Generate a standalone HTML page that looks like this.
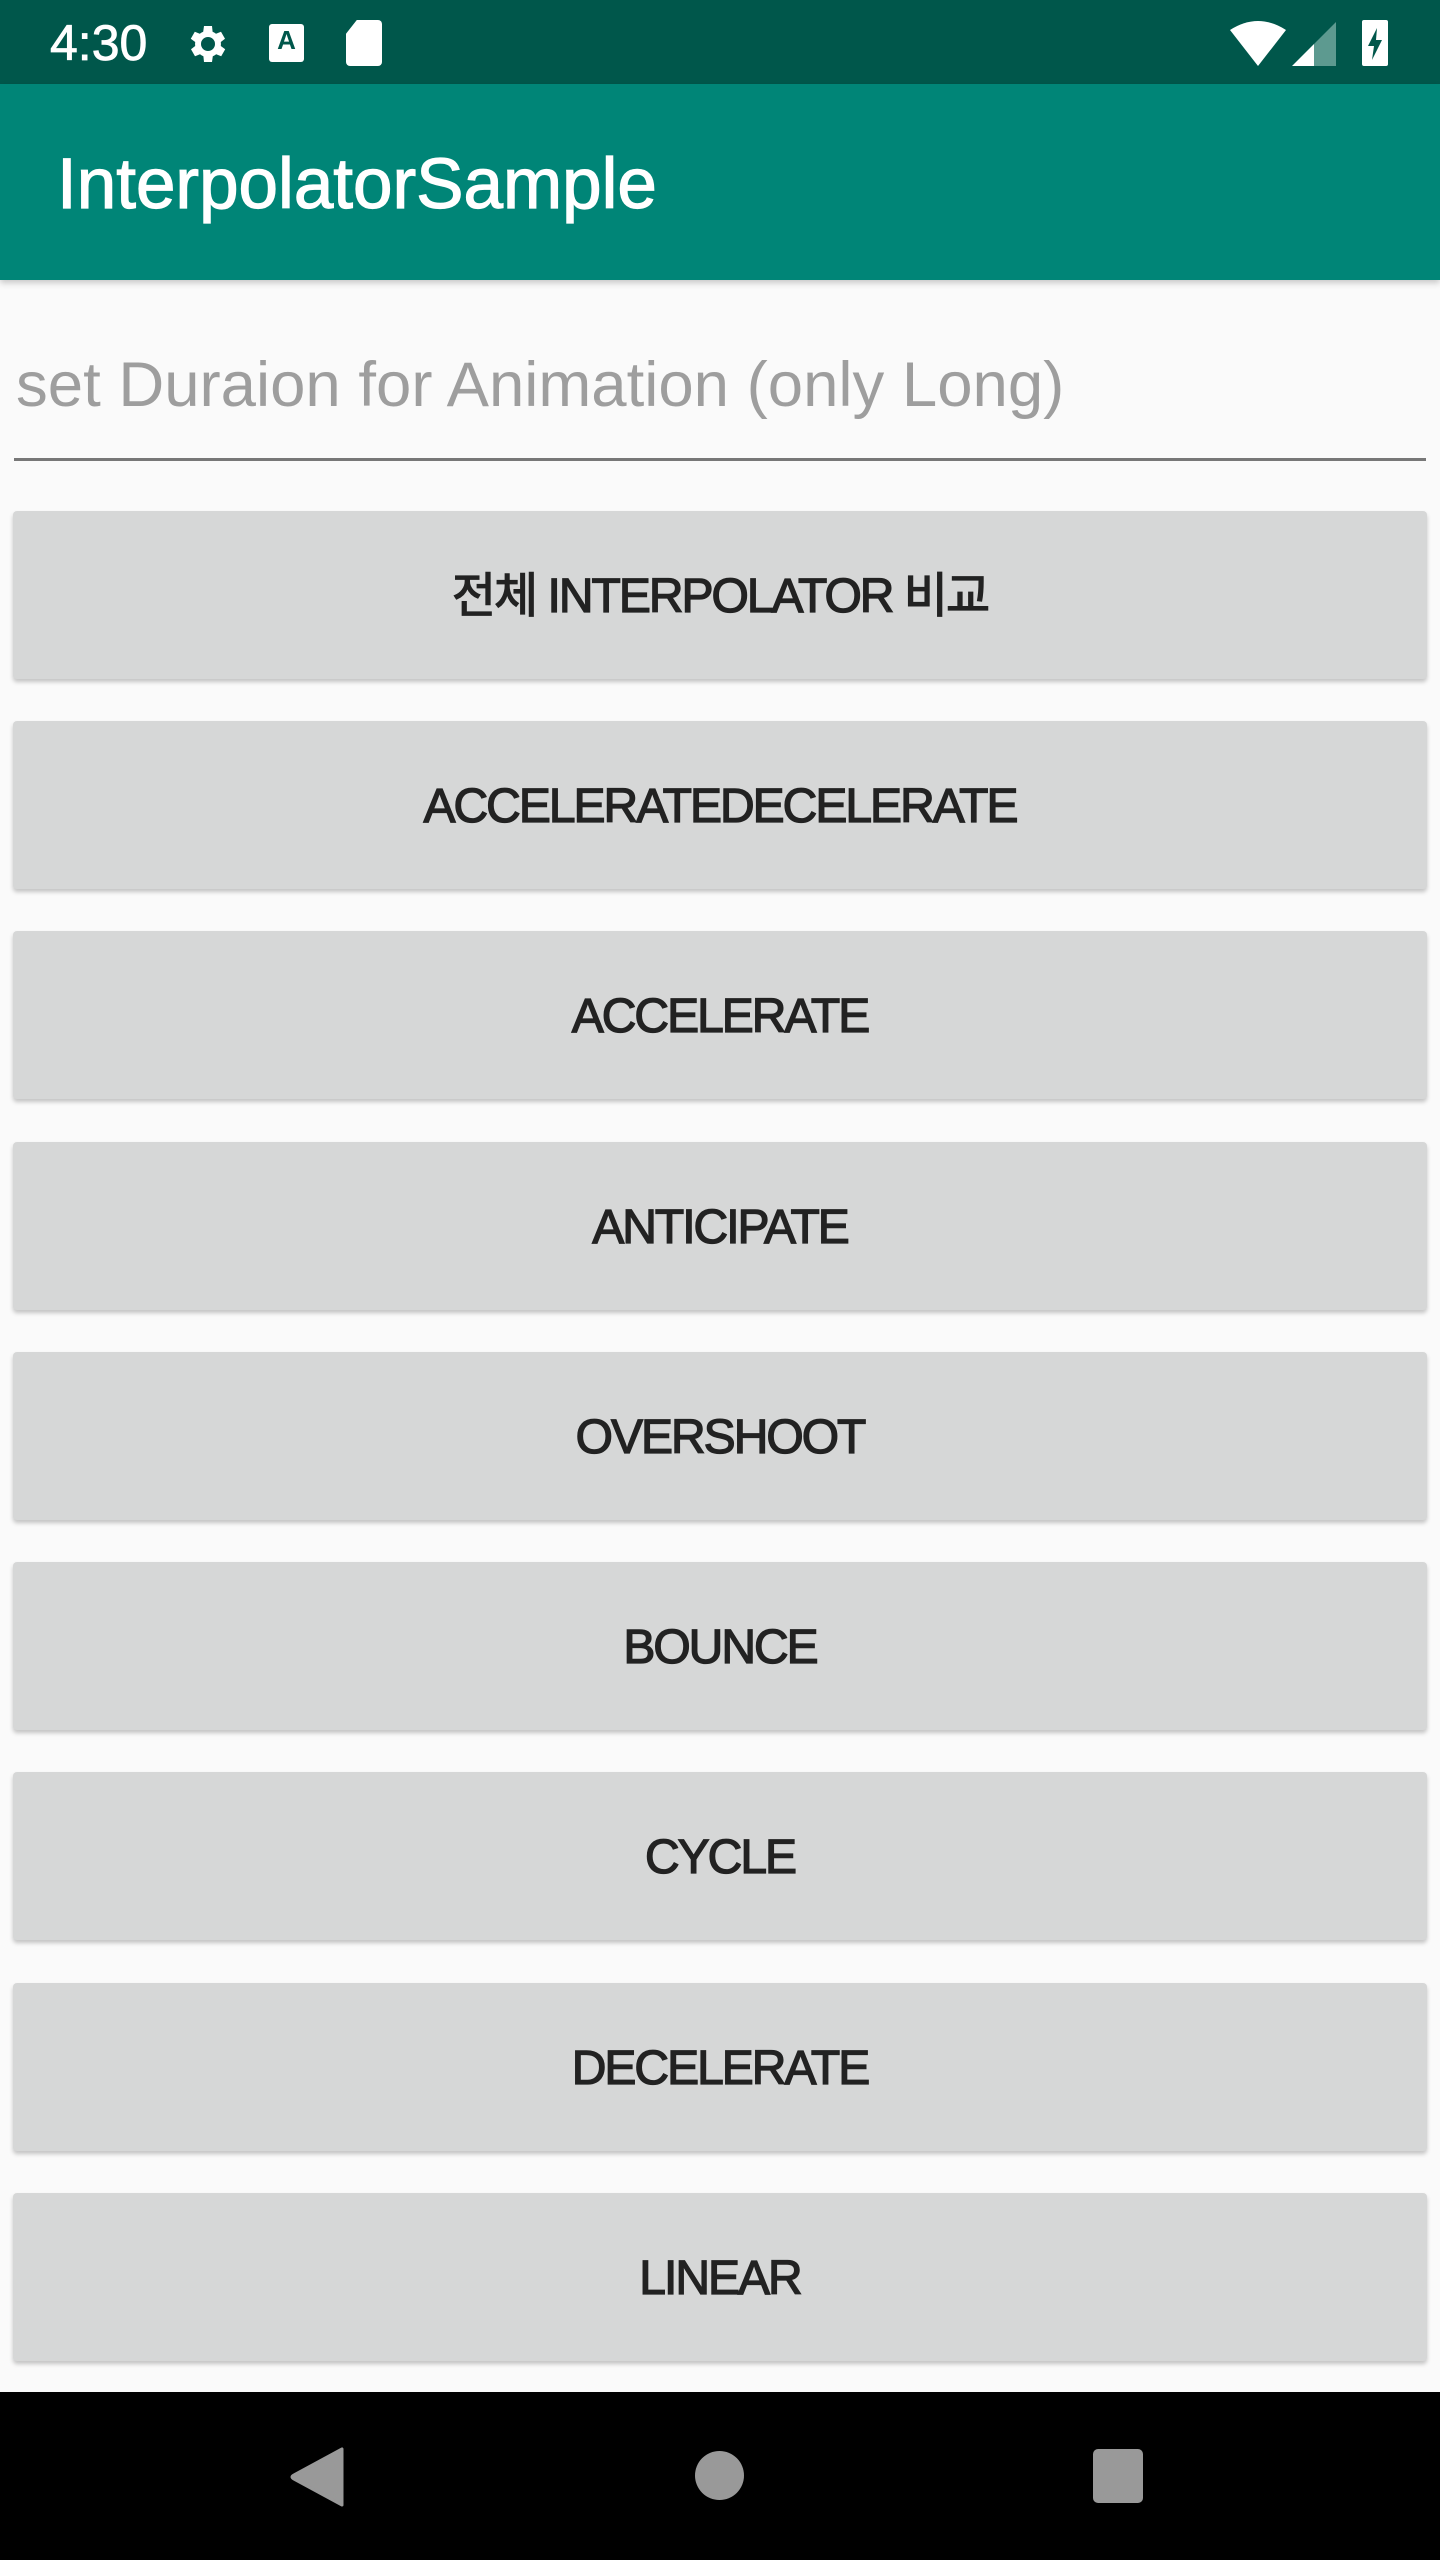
<!DOCTYPE html>
<html><head><meta charset="utf-8"><style>
*{margin:0;padding:0;box-sizing:border-box}
body{width:1440px;height:2560px;background:#fafafa;font-family:"Liberation Sans","Noto Sans CJK KR",sans-serif;position:relative;overflow:hidden}
.sb{position:absolute;left:0;top:0;width:1440px;height:84px;background:#00574b;color:#fff}
.ab{position:absolute;left:0;top:84px;width:1440px;height:196px;background:#008577;box-shadow:0 3px 6px rgba(0,0,0,.2)}
.title{position:absolute;left:57px;top:150px;font-size:71px;color:#fff;line-height:70px;-webkit-text-stroke:1.2px #fff}
.hint{position:absolute;left:16px;top:348px;font-size:63.5px;color:#9e9e9e;line-height:74px}
.line{position:absolute;left:14px;top:458px;width:1412px;height:3px;background:#777}
.btn{position:absolute;left:13px;width:1414px;height:168px;background:#d6d7d7;border-radius:4px;box-shadow:0 3px 4px rgba(0,0,0,.22);font-size:48px;color:#222;text-align:center;line-height:172px;-webkit-text-stroke:1.3px #222;letter-spacing:-2px}
.nav{position:absolute;left:0;top:2392px;width:1440px;height:168px;background:#000}
</style></head><body>
<div class="sb">
<div style="position:absolute;left:50px;top:16px;font-size:50px;line-height:54px;-webkit-text-stroke:0.8px #fff">4:30</div>
<svg style="position:absolute;left:184px;top:20px" width="48" height="48" viewBox="0 0 24 24"><path fill="#fff" d="M19.4 13a7.5 7.5 0 0 0 0-2l2.1-1.6-2-3.5-2.5 1a7 7 0 0 0-1.7-1L15 3h-4l-.4 2.9a7 7 0 0 0-1.7 1l-2.5-1-2 3.5L6.6 11a7.5 7.5 0 0 0 0 2l-2.1 1.6 2 3.5 2.5-1a7 7 0 0 0 1.7 1L11 21h4l.4-2.9a7 7 0 0 0 1.7-1l2.5 1 2-3.5zM13 15.5a3.5 3.5 0 1 1 0-7 3.5 3.5 0 0 1 0 7z" transform="translate(-1 0)"/></svg>
<div style="position:absolute;left:269px;top:24px;width:35px;height:38px;background:#fff;border-radius:3px;color:#00574b;font-size:26px;font-weight:bold;text-align:center;line-height:32px">A</div>
<div style="position:absolute;left:346px;top:20px;width:36px;height:46px;background:#fff;border-radius:4px;clip-path:polygon(30% 0,100% 0,100% 100%,0 100%,0 30%)"></div>
<svg style="position:absolute;left:1230px;top:20px" width="56" height="46" viewBox="0 0 56 46"><path fill="#fff" d="M0 10 Q28 -8 56 10 L28 46z"/></svg>
<svg style="position:absolute;left:1292px;top:22px" width="44" height="44" viewBox="0 0 44 44"><path fill="#fff" d="M0 44 L22 22 L22 44z"/><path fill="#5d9a90" d="M22 22 L44 0 L44 44 L22 44z"/></svg>
<div style="position:absolute;left:1362px;top:20px;width:26px;height:46px;background:#fff;border-radius:2px"></div>
<svg style="position:absolute;left:1366px;top:28px" width="18" height="32" viewBox="0 0 18 32"><path fill="#00574b" d="M11 0 L2 18 H8 L6 32 L16 12 H10z"/></svg>
</div>
<div class="ab"><div class="title" style="top:66px">InterpolatorSample</div></div>
<div class="hint">set Duraion for Animation (only Long)</div>
<div class="line"></div>
<div class="btn" style="top:511px">전체 INTERPOLATOR 비교</div>
<div class="btn" style="top:721px">ACCELERATEDECELERATE</div>
<div class="btn" style="top:931px">ACCELERATE</div>
<div class="btn" style="top:1142px">ANTICIPATE</div>
<div class="btn" style="top:1352px">OVERSHOOT</div>
<div class="btn" style="top:1562px">BOUNCE</div>
<div class="btn" style="top:1772px">CYCLE</div>
<div class="btn" style="top:1983px">DECELERATE</div>
<div class="btn" style="top:2193px">LINEAR</div>
<div class="nav">
<svg style="position:absolute;left:290px;top:55px" width="56" height="60" viewBox="0 0 56 60"><path fill="#999" d="M52 2 L52 58 L4 32 Q0 30 4 28z" stroke="#999" stroke-width="3" stroke-linejoin="round"/></svg>
<div style="position:absolute;left:695px;top:59px;width:49px;height:49px;border-radius:50%;background:#999"></div>
<div style="position:absolute;left:1093px;top:57px;width:50px;height:54px;border-radius:5px;background:#999"></div>
</div>
</body></html>
